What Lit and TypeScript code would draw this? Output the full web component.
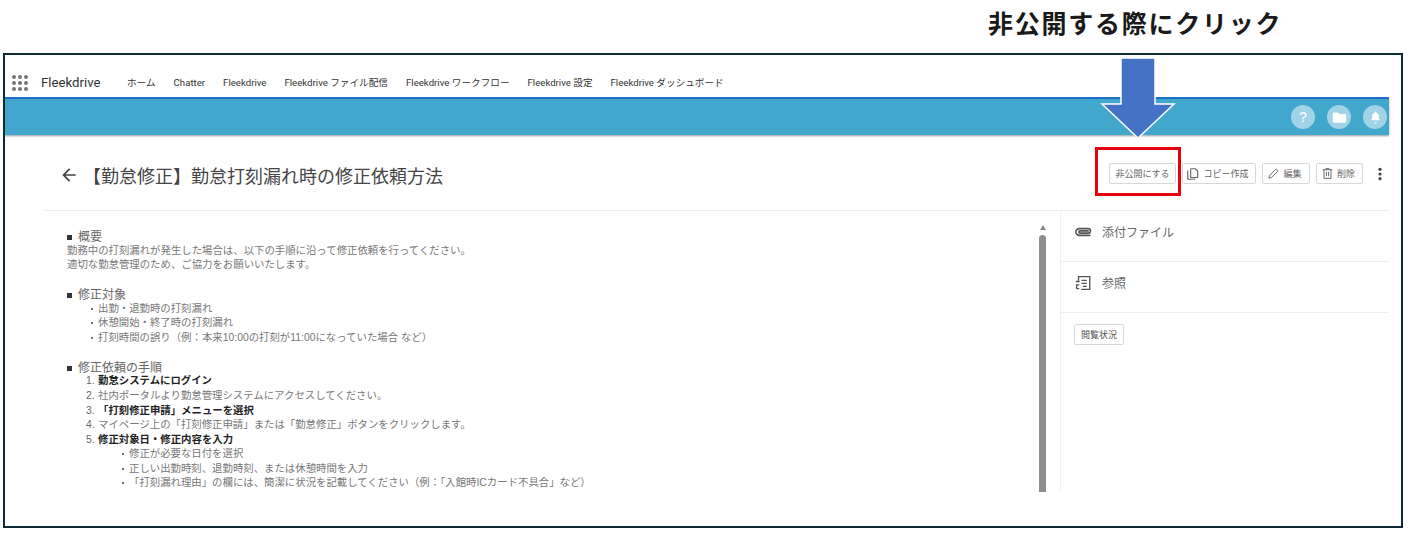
import { LitElement, html, css, svg } from "lit";
import { customElement } from "lit/decorators.js";

const NAV = ["ホーム", "Chatter", "Fleekdrive", "Fleekdrive ファイル配信", "Fleekdrive ワークフロー", "Fleekdrive 設定", "Fleekdrive ダッシュボード"];

type Line = { t: string; k: "h" | "p" | "b1" | "n" | "b2" | "gap"; m?: string; bold?: boolean };
const LINES: Line[] = [
  { k: "h", t: "概要" },
  { k: "p", t: "勤務中の打刻漏れが発生した場合は、以下の手順に沿って修正依頼を行ってください。" },
  { k: "p", t: "適切な勤怠管理のため、ご協力をお願いいたします。" },
  { k: "gap", t: "" },
  { k: "h", t: "修正対象" },
  { k: "b1", t: "出勤・退勤時の打刻漏れ" },
  { k: "b1", t: "休憩開始・終了時の打刻漏れ" },
  { k: "b1", t: "打刻時間の誤り（例：本来10:00の打刻が11:00になっていた場合 など）" },
  { k: "gap", t: "" },
  { k: "h", t: "修正依頼の手順" },
  { k: "n", m: "1.", t: "勤怠システムにログイン", bold: true },
  { k: "n", m: "2.", t: "社内ポータルより勤怠管理システムにアクセスしてください。" },
  { k: "n", m: "3.", t: "「打刻修正申請」メニューを選択", bold: true },
  { k: "n", m: "4.", t: "マイページ上の「打刻修正申請」または「勤怠修正」ボタンをクリックします。" },
  { k: "n", m: "5.", t: "修正対象日・修正内容を入力", bold: true },
  { k: "b2", t: "修正が必要な日付を選択" },
  { k: "b2", t: "正しい出勤時刻、退勤時刻、または休憩時間を入力" },
  { k: "b2", t: "「打刻漏れ理由」の欄には、簡潔に状況を記載してください（例：「入館時ICカード不具合」など）" },
];

const ic = (body: unknown, size = 14, cls = "") =>
  html`<svg class=${cls} width=${size} height=${size} viewBox="0 0 24 24" aria-hidden="true">${body}</svg>`;

const ICONS = {
  back: svg`<path fill="currentColor" d="M20 11H7.830l5.590-5.590L12 4l-8 8 8 8 1.410-1.410L7.830 13H20v-2z"/>`,
  copy: svg`<path fill="currentColor" d="M4 6H2v14c0 1.100.9 2 2 2h12v-2H4V6z"/><path fill="none" stroke="currentColor" stroke-width="2" d="M9 3h7l4 4v10a1 1 0 0 1-1 1H9a1 1 0 0 1-1-1V4a1 1 0 0 1 1-1z"/>`,
  pencil: svg`<path fill="none" stroke="currentColor" stroke-width="1.800" d="M3.500 20.500l1-4.500L16 4.500a1.800 1.800 0 0 1 2.500 0l1 1a1.800 1.800 0 0 1 0 2.500L8 19.500z"/>`,
  trash: svg`<path fill="none" stroke="currentColor" stroke-width="1.800" d="M3 5h18M9 5V3h6v2M5.500 5v16h13V5M10 9v8M14 9v8"/>`,
  more: svg`<circle cx="12" cy="5" r="2.400" fill="currentColor"/><circle cx="12" cy="12" r="2.400" fill="currentColor"/><circle cx="12" cy="19" r="2.400" fill="currentColor"/>`,
  clip: svg`<path fill="none" stroke="currentColor" stroke-width="2.100" stroke-linecap="round" d="M21 16.500H7a4.500 4.500 0 0 1 0-9h12a3 3 0 0 1 0 6H8a1.500 1.500 0 0 1 0-3h11"/>`,
  ref: svg`<path fill="none" stroke="currentColor" stroke-width="1.800" d="M6 9V3.500h15v17H9.500M10 8.500h7M10 12.500h7M12 16.500h5"/><path fill="none" stroke="currentColor" stroke-width="1.800" d="M2.500 10h5M7 14.500H3.500v5M3.500 19.500H7"/>`,
  folder: svg`<path fill="#fff" d="M4 5h6l2 2h8a1.500 1.500 0 0 1 1.500 1.500V18a1.500 1.500 0 0 1-1.500 1.500H4A1.500 1.500 0 0 1 2.500 18V6.500A1.500 1.500 0 0 1 4 5z"/>`,
  bell: svg`<path fill="#fff" d="M12 22a2.200 2.200 0 0 0 2.200-2.200H9.800A2.200 2.200 0 0 0 12 22zm7-5.500v-1L17.500 14v-3.500c0-3-1.600-5.400-4.300-6V3.500a1.200 1.200 0 0 0-2.400 0v1c-2.700.6-4.300 3-4.300 6V14L5 15.500v1z"/>`,
};

@customElement("app-root")
export class AppRoot extends LitElement {
  static styles = css`
    :host {
      display: block;
      position: relative;
      width: 1412px;
      height: 547px;
      overflow: hidden;
      background: #fff;
      font-family: "Noto Sans CJK JP", "Liberation Sans", sans-serif;
      color: #666;
    }
    .callout {
      height: 53px;
      box-sizing: border-box;
      padding: 3px 0 0 988px;
      font-size: 25px;
      line-height: 38px;
      font-weight: 700;
      letter-spacing: 1.75px;
      color: #1a1a1a;
      white-space: nowrap;
    }
    .frame {
      margin-left: 3px;
      width: 1400px;
      height: 475px;
      box-sizing: border-box;
      border: 2px solid #0e2a35;
    }
    .app { width: 1384px; }
    .nav {
      height: 28px;
      border-bottom: 2px solid #1d72c9;
      display: flex;
      align-items: center;
      padding: 14px 0 0 7px;
    }
    .grid {
      display: grid;
      grid-template-columns: repeat(3, 4px);
      gap: 2px;
      margin-right: 13px;
    }
    .grid i { width: 4px; height: 4px; border-radius: 50%; background: #777; }
    .logo {
      font: 13.2px/20px Roboto, sans-serif;
      color: #333;
      margin-right: 27px;
      width: 59px;
      white-space: nowrap;
    }
    .tabs { display: flex; gap: 18px; }
    .tabs span {
      font: 9.65px/14px Roboto, "Noto Sans CJK JP", sans-serif;
      color: #333;
      white-space: nowrap;
    }
    .band {
      height: 36px;
      background: #41a7cd;
      box-shadow: 0 1px 2px rgba(0, 0, 0, 0.4);
      display: flex;
      align-items: center;
      justify-content: flex-end;
      gap: 12px;
      padding-right: 2px;
    }
    .circle {
      width: 24px;
      height: 24px;
      border-radius: 50%;
      background: #a0d3e6;
      display: flex;
      align-items: center;
      justify-content: center;
      color: #fff;
      font: 14px/24px "Liberation Sans", sans-serif;
    }
    .titlebar {
      height: 76px;
      margin-left: 39px;
      box-sizing: border-box;
      border-bottom: 1px solid #eee;
      display: flex;
      align-items: center;
      padding: 2px 0 0 15px;
    }
    .back { color: #444; margin: 3px 4px 0 0; }
    h1 {
      margin: 3px 0 0;
      flex: 1;
      font-size: 18px;
      line-height: 24px;
      font-weight: 400;
      color: #444;
      white-space: nowrap;
    }
    .actions { display: flex; align-items: center; gap: 6px; }
    .btn {
      box-sizing: border-box;
      height: 21px;
      display: flex;
      align-items: center;
      justify-content: center;
      gap: 3px;
      border: 1px solid #d8d8d8;
      border-radius: 2px;
      background: #fff;
      color: #666;
      font: 9px/12px "Noto Sans CJK JP", sans-serif;
      white-space: nowrap;
      padding: 0;
    }
    .iconed { padding-right: 3px; }
    .w67 { width: 67px; }
    .w74 { width: 74px; }
    .w48 { width: 48px; }
    .w47 { width: 47px; }
    .kebab { color: #444; margin: 0 1px 0 3px; }
    .content {
      height: 281px;
      margin-left: 39px;
      display: flex;
    }
    .main {
      flex: none;
      width: 995px;
      box-sizing: border-box;
      padding: 18px 0 0 23px;
      overflow: hidden;
    }
    .line {
      display: flex;
      height: 14.55px;
      font-family: "Liberation Sans", "Noto Sans CJK JP", sans-serif;
      font-size: 10.4px;
      line-height: 14.55px;
      color: #777;
      white-space: nowrap;
    }
    .line.bold { color: #222; font-weight: 700; }
    .line.h { font-size: 12px; line-height: 16.5px; color: #666; }
    .sq { width: 5px; height: 5px; background: #333; margin: 6px 6px 0 0; flex: none; }
    .b1 { padding-left: 24px; }
    .n { padding-left: 19px; }
    .b2 { padding-left: 55px; }
    .dot { width: 2px; height: 2px; background: #444; border-radius: 50%; margin: 6px 5px 0 0; flex: none; }
    .num { width: 12px; flex: none; font-weight: 400; color: #666; font-family: "Liberation Sans", sans-serif; }
    .scroll {
      flex: none;
      width: 7px;
      margin-right: 14px;
      display: flex;
      flex-direction: column;
      align-items: center;
      padding-top: 14px;
      box-sizing: border-box;
      gap: 5px;
    }
    .up { width: 0; height: 0; border: 3.5px solid transparent; border-top: 0; border-bottom: 5px solid #888; }
    .thumb { flex: 1; width: 7px; background: #8e8e8e; border-radius: 3.5px 3.5px 0 0; }
    .side { flex: 1; border-left: 1px solid #f0f0f0; }
    .row {
      height: 51px;
      box-sizing: border-box;
      border-bottom: 1px solid #eee;
      display: flex;
      align-items: flex-start;
      gap: 10px;
      padding: 12px 0 0 13px;
      font-size: 12px;
      line-height: 18px;
      color: #666;
    }
    .row svg { color: #555; }
    .viewed { width: 50px; margin: 11px 0 0 13px; color: #555; }
    .arrow { position: absolute; left: 1100px; top: 57px; }
    .redbox {
      position: absolute;
      left: 1095px;
      top: 147px;
      width: 86px;
      height: 49px;
      box-sizing: border-box;
      border: 3px solid #e8000b;
    }
  `;

  private renderLine(l: Line) {
    if (l.k === "gap") return html`<div class="line"></div>`;
    if (l.k === "h") return html`<div class="line h"><span class="sq"></span>${l.t}</div>`;
    if (l.k === "p") return html`<div class="line">${l.t}</div>`;
    if (l.k === "n")
      return html`<div class="line n ${l.bold ? "bold" : ""}"><span class="num">${l.m}</span>${l.t}</div>`;
    return html`<div class="line ${l.k}"><span class="dot"></span>${l.t}</div>`;
  }

  render() {
    return html`
      <div class="callout">非公開する際にクリック</div>
      <div class="frame">
        <div class="app">
          <div class="nav">
            <div class="grid">${Array.from({ length: 9 }, () => html`<i></i>`)}</div>
            <div class="logo">Fleekdrive</div>
            <div class="tabs">${NAV.map((n) => html`<span>${n}</span>`)}</div>
          </div>
          <div class="band">
            <div class="circle">?</div>
            <div class="circle">${ic(ICONS.folder, 17)}</div>
            <div class="circle">${ic(ICONS.bell, 15)}</div>
          </div>
          <div class="titlebar">
            ${ic(ICONS.back, 20, "back")}
            <h1>【勤怠修正】勤怠打刻漏れ時の修正依頼方法</h1>
            <div class="actions">
              <button class="btn w67">非公開にする</button>
              <button class="btn w74 iconed">${ic(ICONS.copy, 14)}コピー作成</button>
              <button class="btn w48 iconed">${ic(ICONS.pencil, 13)}編集</button>
              <button class="btn w47 iconed">${ic(ICONS.trash, 13)}削除</button>
              ${ic(ICONS.more, 16, "kebab")}
            </div>
          </div>
          <div class="content">
            <div class="main">${LINES.map((l) => this.renderLine(l))}</div>
            <div class="scroll"><div class="up"></div><div class="thumb"></div></div>
            <div class="side">
              <div class="row">${ic(ICONS.clip, 18)}<span>添付ファイル</span></div>
              <div class="row">${ic(ICONS.ref, 18)}<span>参照</span></div>
              <button class="btn viewed">閲覧状況</button>
            </div>
          </div>
        </div>
      </div>
      <svg class="arrow" width="76" height="84" viewBox="0 0 76 84" aria-hidden="true">
        <path d="M21 1h34v46h19L38 81 2 47h19z" fill="#4472c4" stroke="#fff" stroke-width="1.500"/>
      </svg>
      <div class="redbox"></div>
    `;
  }
}
